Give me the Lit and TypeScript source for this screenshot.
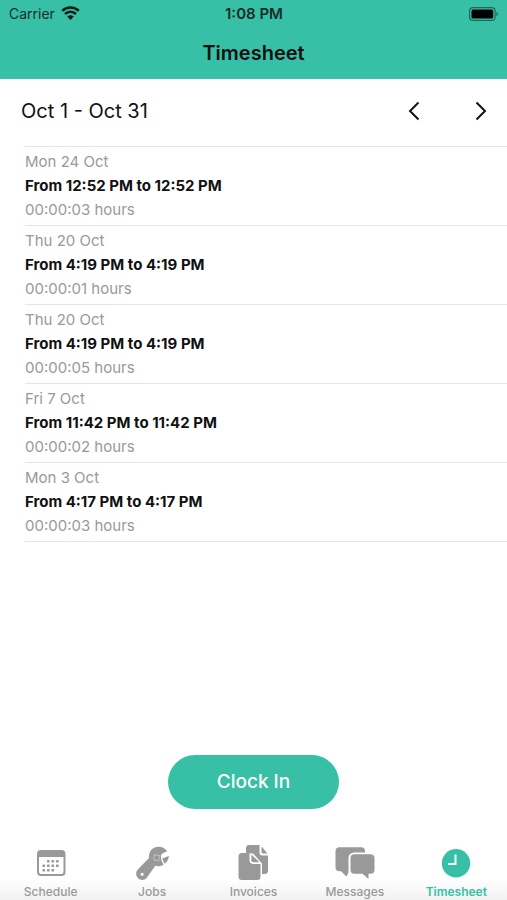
import { LitElement, html, css, svg } from "lit";
import { customElement, property, state } from "lit/decorators.js";
import { classMap } from "lit/directives/class-map.js";

interface Entry {
  day: string;
  from: string;
  to: string;
  duration: string;
}

const ENTRIES: Entry[] = [
  { day: "Mon 24 Oct", from: "12:52 PM", to: "12:52 PM", duration: "00:00:03" },
  { day: "Thu 20 Oct", from: "4:19 PM", to: "4:19 PM", duration: "00:00:01" },
  { day: "Thu 20 Oct", from: "4:19 PM", to: "4:19 PM", duration: "00:00:05" },
  { day: "Fri 7 Oct", from: "11:42 PM", to: "11:42 PM", duration: "00:00:02" },
  { day: "Mon 3 Oct", from: "4:17 PM", to: "4:17 PM", duration: "00:00:03" },
];

const dots = [
  [16, 13], [20.5, 13], [25, 13],
  [11.5, 17.5], [16, 17.5], [20.5, 17.5], [25, 17.5],
  [11.5, 22], [16, 22], [20.5, 22],
];

const TABS = [
  {
    name: "Schedule",
    icon: svg`
      <path fill-rule="evenodd" d="M10 3h20.500a4 4 0 0 1 4 4v18a4 4 0 0 1-4 4H10a4 4 0 0 1-4-4V7a4 4 0 0 1 4-4zM8 10v14.500a2.500 2.500 0 0 0 2.500 2.500h19.500a2.500 2.500 0 0 0 2.500-2.500V10z"/>
      ${dots.map(([x, y]) => svg`<rect x=${x} y=${y} width="2.600" height="2.600" rx="0.600"/>`)}`,
  },
  {
    name: "Jobs",
    icon: svg`
      <path fill-rule="evenodd" d="M33.500 2.300C29-1.500 22-0.800 19 3.200C17.200 5.800 16.800 8.300 17 11L5.800 22.600a5.900 5.900 0 1 0 8.800 8.400L23.300 18.800C26.500 19.600 29.300 19.200 31.500 17.700L29.300 13L28.800 8.200L31 6L35 4.500zM10.200 25.700a1.600 1.600 0 1 1-0.100 3.200a1.600 1.600 0 0 1 0.100-3.200z"/>
      <path d="M30.200 11.500L36.800 9C36.800 12.200 35.200 14.800 32.600 16.800z"/>
      <path class="seam" d="M22.300 7.800l5.300 0.700l-0.800 5.200l-5-0.700z"/>`,
  },
  {
    name: "Invoices",
    icon: svg`
      <path d="M16-2h10.500V5.500a3 3 0 0 0 3 3H35V23.500a3.500 3.500 0 0 1-3.500 3.500H29V16.500L20 6.500H13V1a3 3 0 0 1 3-3z"/>
      <path d="M28.500-0.500L34.500 6.500h-4.500a1.500 1.500 0 0 1-1.500-1.500z"/>
      <path d="M9 6h7.500v7a4 4 0 0 0 4 4H27.500v12.500a3.500 3.500 0 0 1-3.500 3.500H9a3.500 3.500 0 0 1-3.500-3.500V9.500A3.500 3.500 0 0 1 9 6z"/>
      <path d="M18.300 7.500L26.500 15.300h-6.200a2 2 0 0 1-2-2z"/>`,
  },
  {
    name: "Messages",
    icon: svg`
      <path d="M4.500 0.300h21.500a4 4 0 0 1 4 4V5.500H19a5.500 5.500 0 0 0-5.500 5.500v14.500L11.500 29.500L6 24.300H4.500a4 4 0 0 1-4-4v-16a4 4 0 0 1 4-4z"/>
      <path d="M19.500 7.300h16a4 4 0 0 1 4 4v11.500a4 4 0 0 1-4 4H33.500V32L27.500 26.800h-8a4 4 0 0 1-4-4V11.300a4 4 0 0 1 4-4z"/>`,
  },
  {
    name: "Timesheet",
    icon: svg`
      <circle cx="20" cy="16.200" r="14.200"/>
      <path class="hands" d="M19.500 7.500v9.500H12"/>`,
  },
];

@customElement("status-bar")
export class StatusBar extends LitElement {
  static styles = css`
    :host {
      display: grid;
      grid-template-columns: 1fr auto 1fr;
      align-items: center;
      height: 27px;
      padding: 0 8px 0 9px;
      font-size: 14px;
      line-height: 18px;
    }
    .carrier {
      display: flex;
      align-items: center;
      gap: 6px;
      opacity: 0.85;
    }
    .time {
      font-size: 15px;
      font-weight: 600;
      opacity: 0.85;
    }
    .battery {
      justify-self: end;
    }
    svg {
      display: block;
    }
  `;

  render() {
    return html`
      <span class="carrier">
        Carrier
        <svg width="19" height="15" viewBox="0 0 19 15" role="img" aria-label="Wi-Fi">
          <path d="M1.200 4.800A12 12 0 0 1 17.800 4.800M4 8A8 8 0 0 1 15 8" fill="none" stroke="#000" stroke-width="2.500"/>
          <path d="M9.500 14L6.200 10.600a4.700 4.700 0 0 1 6.600 0z"/>
        </svg>
      </span>
      <span class="time">1:08 PM</span>
      <svg class="battery" width="30" height="14" viewBox="0 0 30 14" role="img" aria-label="Battery full">
        <rect x="0.600" y="0.600" width="25.500" height="12.800" rx="3.500" fill="none" stroke="#000" stroke-opacity="0.450" stroke-width="1.200"/>
        <rect x="2.500" y="2.500" width="21.700" height="9" rx="1.500"/>
        <path d="M27.500 4.800a2.400 2.400 0 0 1 0 4.400z" opacity="0.450"/>
      </svg>
    `;
  }
}

@customElement("timesheet-entry")
export class TimesheetEntry extends LitElement {
  @property({ attribute: false }) entry!: Entry;

  static styles = css`
    :host {
      display: block;
      padding: 3px 0;
      border-bottom: 1px solid #e6e6e6;
      font-size: 15px;
      line-height: 24px;
      color: #999;
    }
    p {
      margin: 0;
    }
    .span {
      font-weight: 700;
      color: #111;
    }
  `;

  render() {
    const { day, from, to, duration } = this.entry;
    return html`
      <p>${day}</p>
      <p class="span">From ${from} to ${to}</p>
      <p>${duration} hours</p>
    `;
  }
}

@customElement("tab-bar")
export class TabBar extends LitElement {
  @state() private current = "Timesheet";

  static styles = css`
    :host {
      display: block;
      background: linear-gradient(#fff 60%, #f1f1f1);
    }
    nav {
      display: grid;
      grid-template-columns: repeat(5, 1fr);
    }
    .tab {
      display: flex;
      flex-direction: column;
      align-items: center;
      gap: 3px;
      color: #999;
      font-size: 12px;
      font-weight: 500;
      line-height: 16px;
      text-decoration: none;
    }
    .tab.active {
      color: #37c0a5;
      font-weight: 600;
    }
    svg {
      display: block;
      fill: currentColor;
      overflow: visible;
    }
    .hands {
      fill: none;
      stroke: #fff;
      stroke-width: 2;
    }
    .seam {
      fill: none;
      stroke: #fff;
      stroke-width: 1;
      stroke-opacity: 0.4;
    }
  `;

  render() {
    return html`
      <nav aria-label="Sections">
        ${TABS.map(
          (tab) => html`
            <a
              class=${classMap({ tab: true, active: tab.name === this.current })}
              href="#${tab.name.toLowerCase()}"
              @click=${() => (this.current = tab.name)}
            >
              <svg width="40" height="34" viewBox="0 0 40 34" aria-hidden="true">${tab.icon}</svg>
              <span>${tab.name}</span>
            </a>
          `
        )}
      </nav>
    `;
  }
}

@customElement("app-root")
export class AppRoot extends LitElement {
  static styles = css`
    :host {
      display: flex;
      flex-direction: column;
      min-height: 100vh;
      background: #fff;
      color: #111;
      font-family: Inter, "Liberation Sans", sans-serif;
    }
    header {
      background: #37c0a5;
    }
    h1 {
      margin: 0;
      font-size: 20px;
      font-weight: 600;
      line-height: 52px;
      text-align: center;
    }
    .period {
      display: flex;
      align-items: center;
      padding: 16px 10px 19px 21px;
    }
    h2 {
      flex: 1;
      margin: 0;
      font-size: 20px;
      font-weight: 400;
      line-height: 28px;
    }
    .steps {
      display: flex;
      gap: 35px;
    }
    .step {
      display: grid;
      place-items: center;
      width: 32px;
      height: 32px;
      padding: 0;
      border: 0;
      background: none;
      color: #111;
    }
    .step svg {
      fill: none;
      stroke: currentColor;
      stroke-width: 2;
    }
    .entries {
      margin: 0 0 0 25px;
      padding: 0;
      border-top: 1px solid #e6e6e6;
      list-style: none;
    }
    .action {
      display: flex;
      justify-content: center;
      margin-top: auto;
      padding: 24px 0 38px;
    }
    .clock {
      height: 54px;
      padding: 0 49px;
      border: 0;
      border-radius: 27px;
      background: #37c0a5;
      color: #fff;
      font: 500 19px/24px Inter, "Liberation Sans", sans-serif;
    }
  `;

  render() {
    return html`
      <header>
        <status-bar></status-bar>
        <h1>Timesheet</h1>
      </header>
      <main>
        <div class="period">
          <h2>Oct 1 - Oct 31</h2>
          <div class="steps">
            <button class="step" aria-label="Previous month">
              <svg width="12" height="20" viewBox="0 0 12 20"><path d="M10.500 1.500L2 10l8.500 8.500" /></svg>
            </button>
            <button class="step" aria-label="Next month">
              <svg width="12" height="20" viewBox="0 0 12 20"><path d="M1.500 1.500L10 10l-8.500 8.500" /></svg>
            </button>
          </div>
        </div>
        <ul class="entries">
          ${ENTRIES.map((entry) => html`<li><timesheet-entry .entry=${entry}></timesheet-entry></li>`)}
        </ul>
      </main>
      <div class="action">
        <button class="clock">Clock In</button>
      </div>
      <tab-bar></tab-bar>
    `;
  }
}
